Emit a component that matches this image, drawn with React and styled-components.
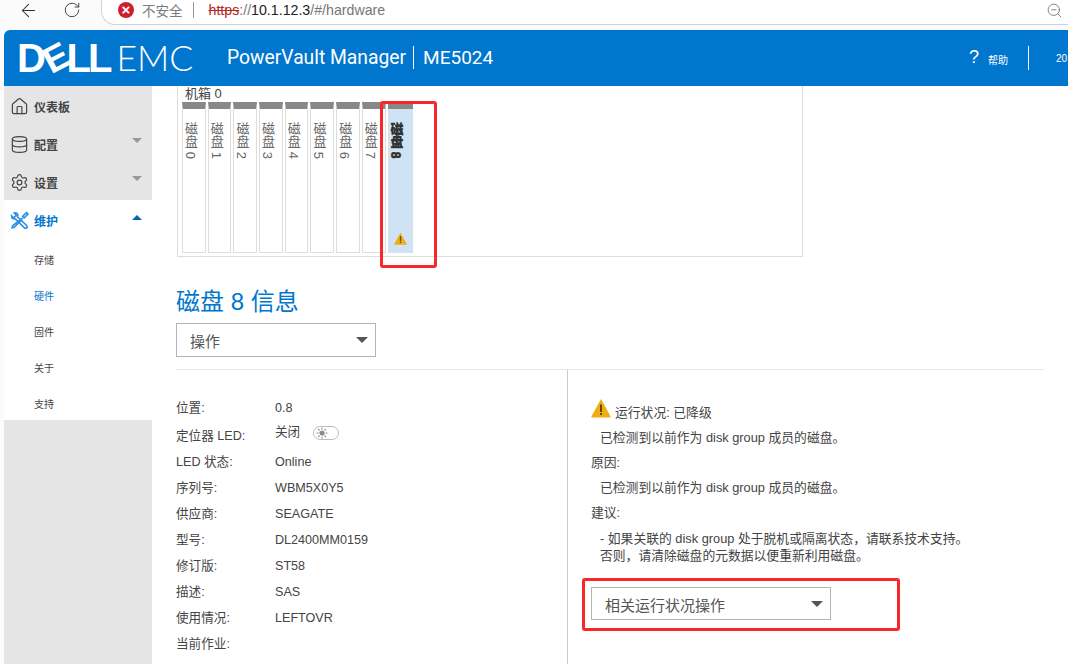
import styled, { createGlobalStyle } from "styled-components";
import { ArrowLeft, RotateCw, ZoomOut, House, Database, Settings, Sun } from "lucide-react";

const FONT = `"Liberation Sans", "Noto Sans CJK SC", sans-serif`;

const slots = [0, 1, 2, 3, 4, 5, 6, 7];

const details = [
  { label: "位置:", value: "0.8" },
  { label: "定位器 LED:", value: "关闭", toggle: true },
  { label: "LED 状态:", value: "Online" },
  { label: "序列号:", value: "WBM5X0Y5" },
  { label: "供应商:", value: "SEAGATE" },
  { label: "型号:", value: "DL2400MM0159" },
  { label: "修订版:", value: "ST58" },
  { label: "描述:", value: "SAS" },
  { label: "使用情况:", value: "LEFTOVR" },
  { label: "当前作业:", value: "" },
];

const WarningIcon = ({ size }) => (
  <svg width={size} height={size} viewBox="0 0 20 20">
    <path d="M10 1 L19.6 18.6 Q20 19.6 19 19.6 H1 Q0 19.6 .4 18.6 Z" fill="#f0ad10" />
    <rect x="9" y="6.5" width="2" height="7.5" fill="#5c4a14" />
    <rect x="9" y="15" width="2" height="2" fill="#5c4a14" />
  </svg>
);

const ToolsIcon = () => (
  <svg width="19" height="19" viewBox="0 0 18 18" fill="none" stroke="#2f8fe0" strokeWidth="1.5">
    <path d="M1.5 4.5 L3.5 6.5 L6 4 L4 2 Q7 1 7.5 4 L7 5.5 L16 14 Q16.8 15.5 15.5 16.2 Q14.5 16.8 13.5 15.8 L5 7.5 Q1.5 8 1.5 4.5 Z" />
    <path d="M15.5 1.5 L17 3 L13.5 6.5 L12 5 Z M12 6.5 L2.5 14 L2 16 L4 15.5 L11.5 8" />
  </svg>
);

const App = () => (
  <Page>
    <GlobalStyle />
    <BrowserBar>
      <ArrowLeft size={21} strokeWidth={1.2} />
      <ReloadSlot>
        <RotateCw size={18} strokeWidth={1.2} />
      </ReloadSlot>
      <UrlPill>
        <SecurityDot>×</SecurityDot>
        <SecurityText>不安全</SecurityText>
        <UrlDivider />
        <UrlText>
          <Scheme>https</Scheme>://<Host>10.1.12.3</Host>/#/hardware
        </UrlText>
        <ZoomSlot>
          <ZoomOut size={17} strokeWidth={1.1} />
        </ZoomSlot>
      </UrlPill>
    </BrowserBar>

    <Frame>
      <Header>
        <Logo>
          <DellMark>
            D<TiltedE>E</TiltedE>LL
          </DellMark>
          <EmcMark>EMC</EmcMark>
        </Logo>
        <ProductName>PowerVault Manager</ProductName>
        <ProductModel>ME5024</ProductModel>
        <HeaderRight>
          <HelpMark>?</HelpMark>
          <HelpText>帮助</HelpText>
          <HeaderDivider />
          <ClippedDate>20</ClippedDate>
        </HeaderRight>
      </Header>

      <Body>
        <Sidebar>
          <NavItem>
            <House size={19} strokeWidth={1.5} />
            <NavLabel>仪表板</NavLabel>
          </NavItem>
          <NavItem>
            <Database size={19} strokeWidth={1.5} />
            <NavLabel>配置</NavLabel>
            <Caret />
          </NavItem>
          <NavItem>
            <Settings size={19} strokeWidth={1.5} />
            <NavLabel>设置</NavLabel>
            <Caret />
          </NavItem>
          <OpenGroup>
            <NavItem $active>
              <ToolsIcon />
              <NavLabel $active>维护</NavLabel>
              <Caret $up />
            </NavItem>
            <SubList>
              <SubItem>存储</SubItem>
              <SubItem $active>硬件</SubItem>
              <SubItem>固件</SubItem>
              <SubItem>关于</SubItem>
              <SubItem>支持</SubItem>
            </SubList>
          </OpenGroup>
        </Sidebar>

        <Main>
          <Enclosure>
            <EnclosureTitle>机箱 0</EnclosureTitle>
            <SlotRow>
              {slots.map((n) => (
                <Slot key={n}>
                  <SlotLabel>磁盘 {n}</SlotLabel>
                </Slot>
              ))}
              <Slot $selected>
                <SlotLabel $selected>磁盘 8</SlotLabel>
                <SlotWarning>
                  <WarningIcon size={13} />
                </SlotWarning>
              </Slot>
            </SlotRow>
            <Highlight $top />
          </Enclosure>

          <Title>磁盘 8 信息</Title>
          <Select $wide>
            操作
            <SelectCaret />
          </Select>

          <Columns>
            <DetailList>
              {details.map((d) => (
                <DetailRow key={d.label}>
                  <DetailLabel>{d.label}</DetailLabel>
                  <DetailValue $raised={d.toggle}>{d.value}</DetailValue>
                  {d.toggle && (
                    <Toggle>
                      <Sun size={12} strokeWidth={2.4} color="#888" fill="#888" />
                    </Toggle>
                  )}
                </DetailRow>
              ))}
            </DetailList>

            <HealthPanel>
              <HealthHead>
                <WarningIcon size={20} />
                <HealthStatus>运行状况: 已降级</HealthStatus>
              </HealthHead>
              <HealthText>已检测到以前作为 disk group 成员的磁盘。</HealthText>
              <HealthHeading>原因:</HealthHeading>
              <HealthText>已检测到以前作为 disk group 成员的磁盘。</HealthText>
              <HealthHeading>建议:</HealthHeading>
              <HealthAdvice>
                - 如果关联的 disk group 处于脱机或隔离状态，请联系技术支持。
                <br />
                否则，请清除磁盘的元数据以便重新利用磁盘。
              </HealthAdvice>
              <HealthActions>
                <Select>
                  相关运行状况操作
                  <SelectCaret />
                </Select>
                <Highlight />
              </HealthActions>
            </HealthPanel>
          </Columns>
        </Main>
      </Body>
    </Frame>
  </Page>
);

const GlobalStyle = createGlobalStyle`
  html, body {
    margin: 0;
    padding: 0;
    background: #fff;
    overflow: hidden;
  }
  * {
    box-sizing: border-box;
  }
`;

const Page = styled.div`
  width: 1068px;
  height: 664px;
  overflow: hidden;
  display: flex;
  flex-direction: column;
  font-family: ${FONT};
  color: #444;
  background: #fbfbfb;
`;

const BrowserBar = styled.div`
  height: 30px;
  flex: none;
  display: flex;
  align-items: flex-start;
  padding: 0 0 0 18px;
  color: #333;
  background: #fbfbfb;
`;

const ReloadSlot = styled.div`
  margin: 1px 0 0 24px;
  width: 38px;
`;

const UrlPill = styled.div`
  flex: 1;
  height: 26px;
  margin-top: -1px;
  display: flex;
  align-items: center;
  padding: 0 5px 4px 16px;
  background: #fff;
  border: 1px solid #d2d2d2;
  border-right: none;
  border-radius: 0 0 0 14px;
  font-size: 14.2px;
  color: #777;
`;

const SecurityDot = styled.span`
  width: 16px;
  height: 16px;
  border-radius: 50%;
  background: #cc2030;
  color: #fff;
  font-size: 15px;
  font-weight: bold;
  line-height: 15px;
  text-align: center;
`;

const SecurityText = styled.span`
  margin-left: 8px;
  font-size: 13.5px;
  color: #7a7a7a;
`;

const UrlDivider = styled.span`
  width: 1px;
  height: 16px;
  margin: 0 15px 0 10px;
  background: #999;
`;

const UrlText = styled.span`
  flex: 1;
`;

const Scheme = styled.span`
  color: #b3261e;
  text-decoration: line-through;
`;

const Host = styled.span`
  color: #222;
`;

const ZoomSlot = styled.div`
  display: flex;
  color: #666;
`;

const Frame = styled.div`
  flex: 1;
  min-height: 0;
  margin-left: 4px;
  display: flex;
  flex-direction: column;
`;

const Header = styled.header`
  height: 56px;
  flex: none;
  display: flex;
  align-items: center;
  padding-left: 13px;
  background: #0076ce;
  color: #fff;
  border-radius: 6px 0 0 0;
`;

const Logo = styled.div`
  width: 210px;
  display: flex;
  align-items: center;
`;

const DellMark = styled.span`
  font-size: 40px;
  font-weight: bold;
  letter-spacing: -3px;
  line-height: 1;
`;

const TiltedE = styled.span`
  display: inline-block;
  transform: rotate(-28deg) scale(0.92);
`;

const EmcMark = styled.span`
  margin-left: 7px;
  font-family: Lato, sans-serif;
  font-weight: 300;
  font-size: 35.5px;
  line-height: 1;
`;

const ProductName = styled.span`
  padding-right: 7px;
  border-right: 1px solid #fff;
  font-family: Roboto, sans-serif;
  font-size: 19.3px;
  line-height: 23px;
  margin-top: -1px;
`;

const ProductModel = styled.span`
  margin: -1px 0 0 9px;
  font-family: Roboto, sans-serif;
  font-size: 19px;
`;

const HeaderRight = styled.div`
  margin-left: auto;
  display: flex;
  align-items: center;
  width: 99px;
`;

const HelpMark = styled.span`
  width: 19px;
  font-size: 18px;
  margin-top: -2px;
`;

const HelpText = styled.span`
  font-size: 10px;
  width: 40px;
  margin-top: 3px;
`;

const HeaderDivider = styled.span`
  width: 1px;
  height: 24px;
  background: #fff;
`;

const ClippedDate = styled.span`
  margin-left: 27px;
  font-size: 10px;
`;

const Body = styled.div`
  flex: 1;
  min-height: 0;
  display: flex;
`;

const Sidebar = styled.nav`
  width: 148px;
  flex: none;
  background: #e5e5e5;
  color: #444;
`;

const NavItem = styled.div`
  position: relative;
  height: 38px;
  display: flex;
  align-items: center;
  gap: 5px;
  padding: 2px 0 0 6px;
  color: ${(p) => (p.$active ? "#2f8fe0" : "#444")};
`;

const NavLabel = styled.span`
  font-size: 12px;
  font-weight: bold;
  color: ${(p) => (p.$active ? "#0076ce" : "#444")};
`;

const Caret = styled.span`
  position: absolute;
  right: 10px;
  top: ${(p) => (p.$up ? "15px" : "14px")};
  width: 0;
  height: 0;
  border-left: 5px solid transparent;
  border-right: 5px solid transparent;
  ${(p) =>
    p.$up
      ? "border-bottom: 5px solid #0b63a8;"
      : "border-top: 5px solid #999;"}
`;

const OpenGroup = styled.div`
  background: #fff;
  height: 220px;
  overflow: hidden;
`;

const SubList = styled.div`
  padding-top: 3px;
`;

const SubItem = styled.div`
  height: 36px;
  display: flex;
  align-items: center;
  padding-left: 30px;
  font-size: 10px;
  color: ${(p) => (p.$active ? "#0076ce" : "#444")};
`;

const Main = styled.main`
  flex: 1;
  min-width: 0;
  padding: 0 24px;
  background: #fff;
`;

const Enclosure = styled.section`
  position: relative;
  width: 626px;
  height: 171px;
  margin-left: 1px;
  padding: 0 4px;
  border: 1px solid #ddd;
  border-top: none;
  font-size: 13px;
`;

const EnclosureTitle = styled.div`
  height: 16px;
  line-height: 15px;
  padding-left: 3px;
`;

const SlotRow = styled.div`
  display: flex;
  gap: 2px;
`;

const Slot = styled.div`
  width: ${(p) => (p.$selected ? "25px" : "23.7px")};
  height: 151px;
  position: relative;
  border: ${(p) => (p.$selected ? "none" : "1px solid #ddd")};
  border-top: 7px solid #888;
  background: ${(p) => (p.$selected ? "#cfe3f5" : "#fff")};
  display: flex;
  padding: 13px 0 0 ${(p) => (p.$selected ? "2px" : "1px")};
`;

const SlotLabel = styled.span`
  writing-mode: vertical-rl;
  font-size: 13px;
  line-height: 13px;
  height: 48px;
  color: #666;
  ${(p) => p.$selected && "font-weight: bold; color: #333; text-shadow: 0 1px 0 #333;"}
`;

const SlotWarning = styled.span`
  position: absolute;
  bottom: 8px;
  left: 6px;
  display: flex;
`;

const Highlight = styled.div`
  position: absolute;
  border: 3px solid #f9262a;
  border-radius: 3px;
  pointer-events: none;
  ${(p) =>
    p.$top
      ? "left: 202px; top: 15px; width: 57px; height: 167px;"
      : "left: -9px; top: -9px; width: 318px; height: 53px;"}
`;

const Title = styled.h2`
  margin: 30px 0 0;
  height: 36px;
  font-size: 24px;
  line-height: 29px;
  font-weight: normal;
  color: #0076ce;
`;

const Select = styled.div`
  position: relative;
  width: ${(p) => (p.$wide ? "200px" : "240px")};
  height: ${(p) => (p.$wide ? "34px" : "33px")};
  display: flex;
  align-items: center;
  padding: 1px 0 0 13px;
  border: 1px solid #b5b5b5;
  font-size: 15px;
  color: #555;
`;

const SelectCaret = styled.span`
  position: absolute;
  right: 7px;
  top: 13px;
  width: 0;
  height: 0;
  border-left: 6px solid transparent;
  border-right: 6px solid transparent;
  border-top: 6px solid #555;
`;

const Columns = styled.div`
  margin-top: 12px;
  width: 868px;
  display: flex;
  border-top: 1px solid #e6e6e6;
`;

const DetailList = styled.div`
  width: 392px;
  padding-top: 25px;
  border-right: 1px solid #ccc;
  height: 300px;
`;

const DetailRow = styled.div`
  height: 26px;
  display: flex;
  align-items: center;
  font-size: 12.6px;
  &:first-child {
    margin-bottom: 2px;
  }
`;

const DetailLabel = styled.span`
  width: 99px;
  margin-top: -4px;
`;

const DetailValue = styled.span`
  ${(p) => p.$raised && "margin-top: -11px;"}
`;

const Toggle = styled.span`
  width: 26px;
  height: 14px;
  margin: -6px 0 0 13px;
  padding-left: 2px;
  display: flex;
  align-items: center;
  border: 1px solid #bbb;
  border-radius: 7px;
`;

const HealthPanel = styled.div`
  flex: 1;
  padding: 28px 0 0 23px;
  font-size: 12.8px;
`;

const HealthHead = styled.div`
  height: 27px;
  display: flex;
  align-items: flex-start;
  gap: 4px;
`;

const HealthStatus = styled.span`
  margin-top: 7px;
  line-height: 16px;
`;

const HealthText = styled.div`
  height: 25px;
  margin-left: 9px;
  line-height: 26px;
  white-space: nowrap;
`;

const HealthHeading = styled.div`
  height: 25px;
  line-height: 26px;
`;

const HealthAdvice = styled.div`
  margin: 5px 0 0 9px;
  line-height: 17px;
  white-space: nowrap;
`;

const HealthActions = styled.div`
  position: relative;
  margin-top: 23px;
`;

export default App;
